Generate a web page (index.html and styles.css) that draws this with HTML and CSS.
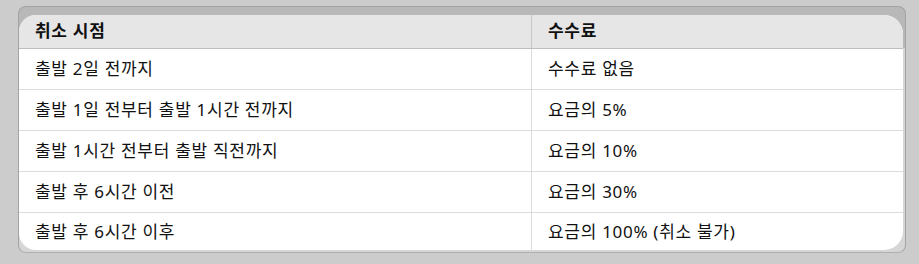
FILE: index.html
```html
<!DOCTYPE html>
<html lang="ko">
<head>
<meta charset="utf-8">
<link rel="stylesheet" href="styles.css">
</head>
<body>
<div class="page">
  <div class="frame">
    <div class="card">
      <table class="fees">
        <thead>
          <tr><th class="c1">취소 시점</th><th class="c2">수수료</th></tr>
        </thead>
        <tbody>
          <tr><td class="c1">출발 2일 전까지</td><td class="c2">수수료 없음</td></tr>
          <tr><td class="c1">출발 1일 전부터 출발 1시간 전까지</td><td class="c2">요금의 5%</td></tr>
          <tr><td class="c1">출발 1시간 전부터 출발 직전까지</td><td class="c2">요금의 10%</td></tr>
          <tr><td class="c1">출발 후 6시간 이전</td><td class="c2">요금의 30%</td></tr>
          <tr class="last"><td class="c1">출발 후 6시간 이후</td><td class="c2">요금의 100% (취소 불가)</td></tr>
        </tbody>
      </table>
    </div>
  </div>
</div>
</body>
</html>
```

FILE: styles.css
```css
html, body {
  margin: 0;
  padding: 0;
  background: #cccccc;
}
body {
  font-family: "Noto Sans", "Noto Sans CJK KR", sans-serif;
  color: #111;
}
.page {
  padding: 6px 13px 0 18px;
}
.frame {
  border: 1px solid #a3a3a3;
  border-bottom-color: #b0b0b0;
  border-radius: 8px;
  background: linear-gradient(#b8b8b8 0, #b8b8b8 41px, #d6d6d6 41px);
  padding: 8px 2px 2px 0;
}
.card {
  background: #fff;
  border-radius: 17px 19px 19px 17px;
  overflow: hidden;
}
.fees {
  width: 100%;
  border-collapse: collapse;
  table-layout: fixed;
}
.fees th, .fees td {
  text-align: left;
  padding: 0 0 0 16px;
  font-size: 17px;
  letter-spacing: 0.7px;
  line-height: 20px;
}
.fees .c1 { width: 496px; }
.fees th {
  background: #e6e6e6;
  font-weight: 700;
  height: 32px;
  border-bottom: 1px solid #bdbdbd;
  padding-bottom: 1px;
}
.fees th.c1 { border-right: 1px solid #c8c8c8; }
.fees td {
  height: 40px;
  border-bottom: 1px solid #dcdcdc;
  font-weight: 400;
}
.fees td.c1 { border-right: 1px solid #dcdcdc; }
.fees tr.last td {
  border-bottom: none;
  height: 37px;
}
```
